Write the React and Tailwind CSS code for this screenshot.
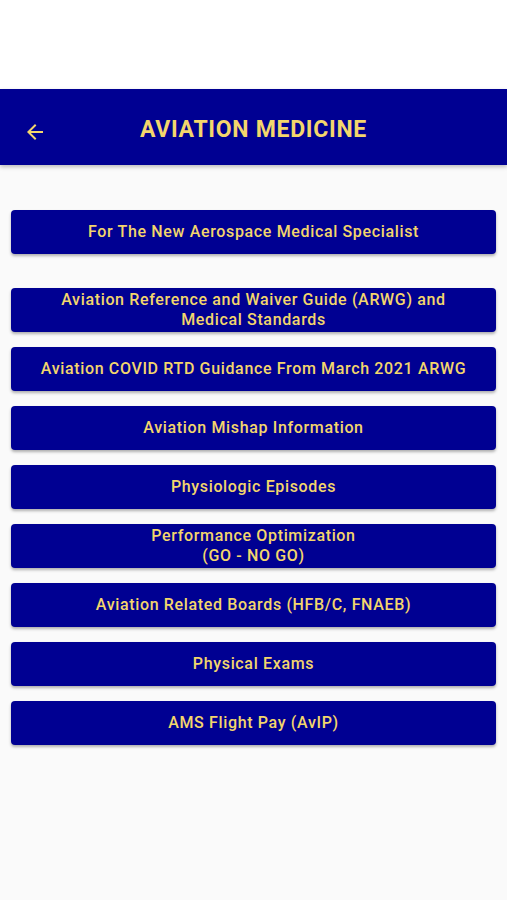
import React from "react";

const items = [
  ["For The New Aerospace Medical Specialist"],
  ["Aviation Reference and Waiver Guide (ARWG) and", "Medical Standards"],
  ["Aviation COVID RTD Guidance From March 2021 ARWG"],
  ["Aviation Mishap Information"],
  ["Physiologic Episodes"],
  ["Performance Optimization", "(GO - NO GO)"],
  ["Aviation Related Boards (HFB/C, FNAEB)"],
  ["Physical Exams"],
  ["AMS Flight Pay (AvIP)"],
];

function Btn({ lines }) {
  return (
    <button className="w-full h-[44px] rounded-[4px] bg-[#000092] text-[#f3d66c] text-[16px] leading-[20px] tracking-[0.65px] font-medium flex flex-col items-center justify-center shadow-[0_2px_3px_rgba(0,0,0,0.3)]">
      {lines.map((l, i) => (
        <span key={i}>{l}</span>
      ))}
    </button>
  );
}

export default function App() {
  return (
    <div className="w-[507px] h-[900px] bg-[#fafafa] flex flex-col" style={{ fontFamily: "Roboto, 'Noto Sans', sans-serif" }}>
      <div className="h-[89px] bg-white" />
      <header className="h-[76px] pt-[7px] bg-[#000092] relative flex items-center justify-center shadow-[0_2px_4px_rgba(0,0,0,0.25)]">
        <svg className="absolute left-[23px] top-[31px]" width="24" height="24" viewBox="0 0 24 24">
          <path d="M20 11H7.83l5.59-5.59L12 4l-8 8 8 8 1.41-1.41L7.83 13H20v-2z" fill="#f3d66c" />
        </svg>
        <h1 className="text-[23px] font-bold text-[#f3d66c] tracking-[0.7px]">AVIATION MEDICINE</h1>
      </header>
      <div className="px-[11px] pt-[45px] flex flex-col">
        <Btn lines={items[0]} />
        <div className="mt-[34px] flex flex-col gap-[15px]">
          {items.slice(1).map((l, i) => (
            <Btn key={i} lines={l} />
          ))}
        </div>
      </div>
    </div>
  );
}
